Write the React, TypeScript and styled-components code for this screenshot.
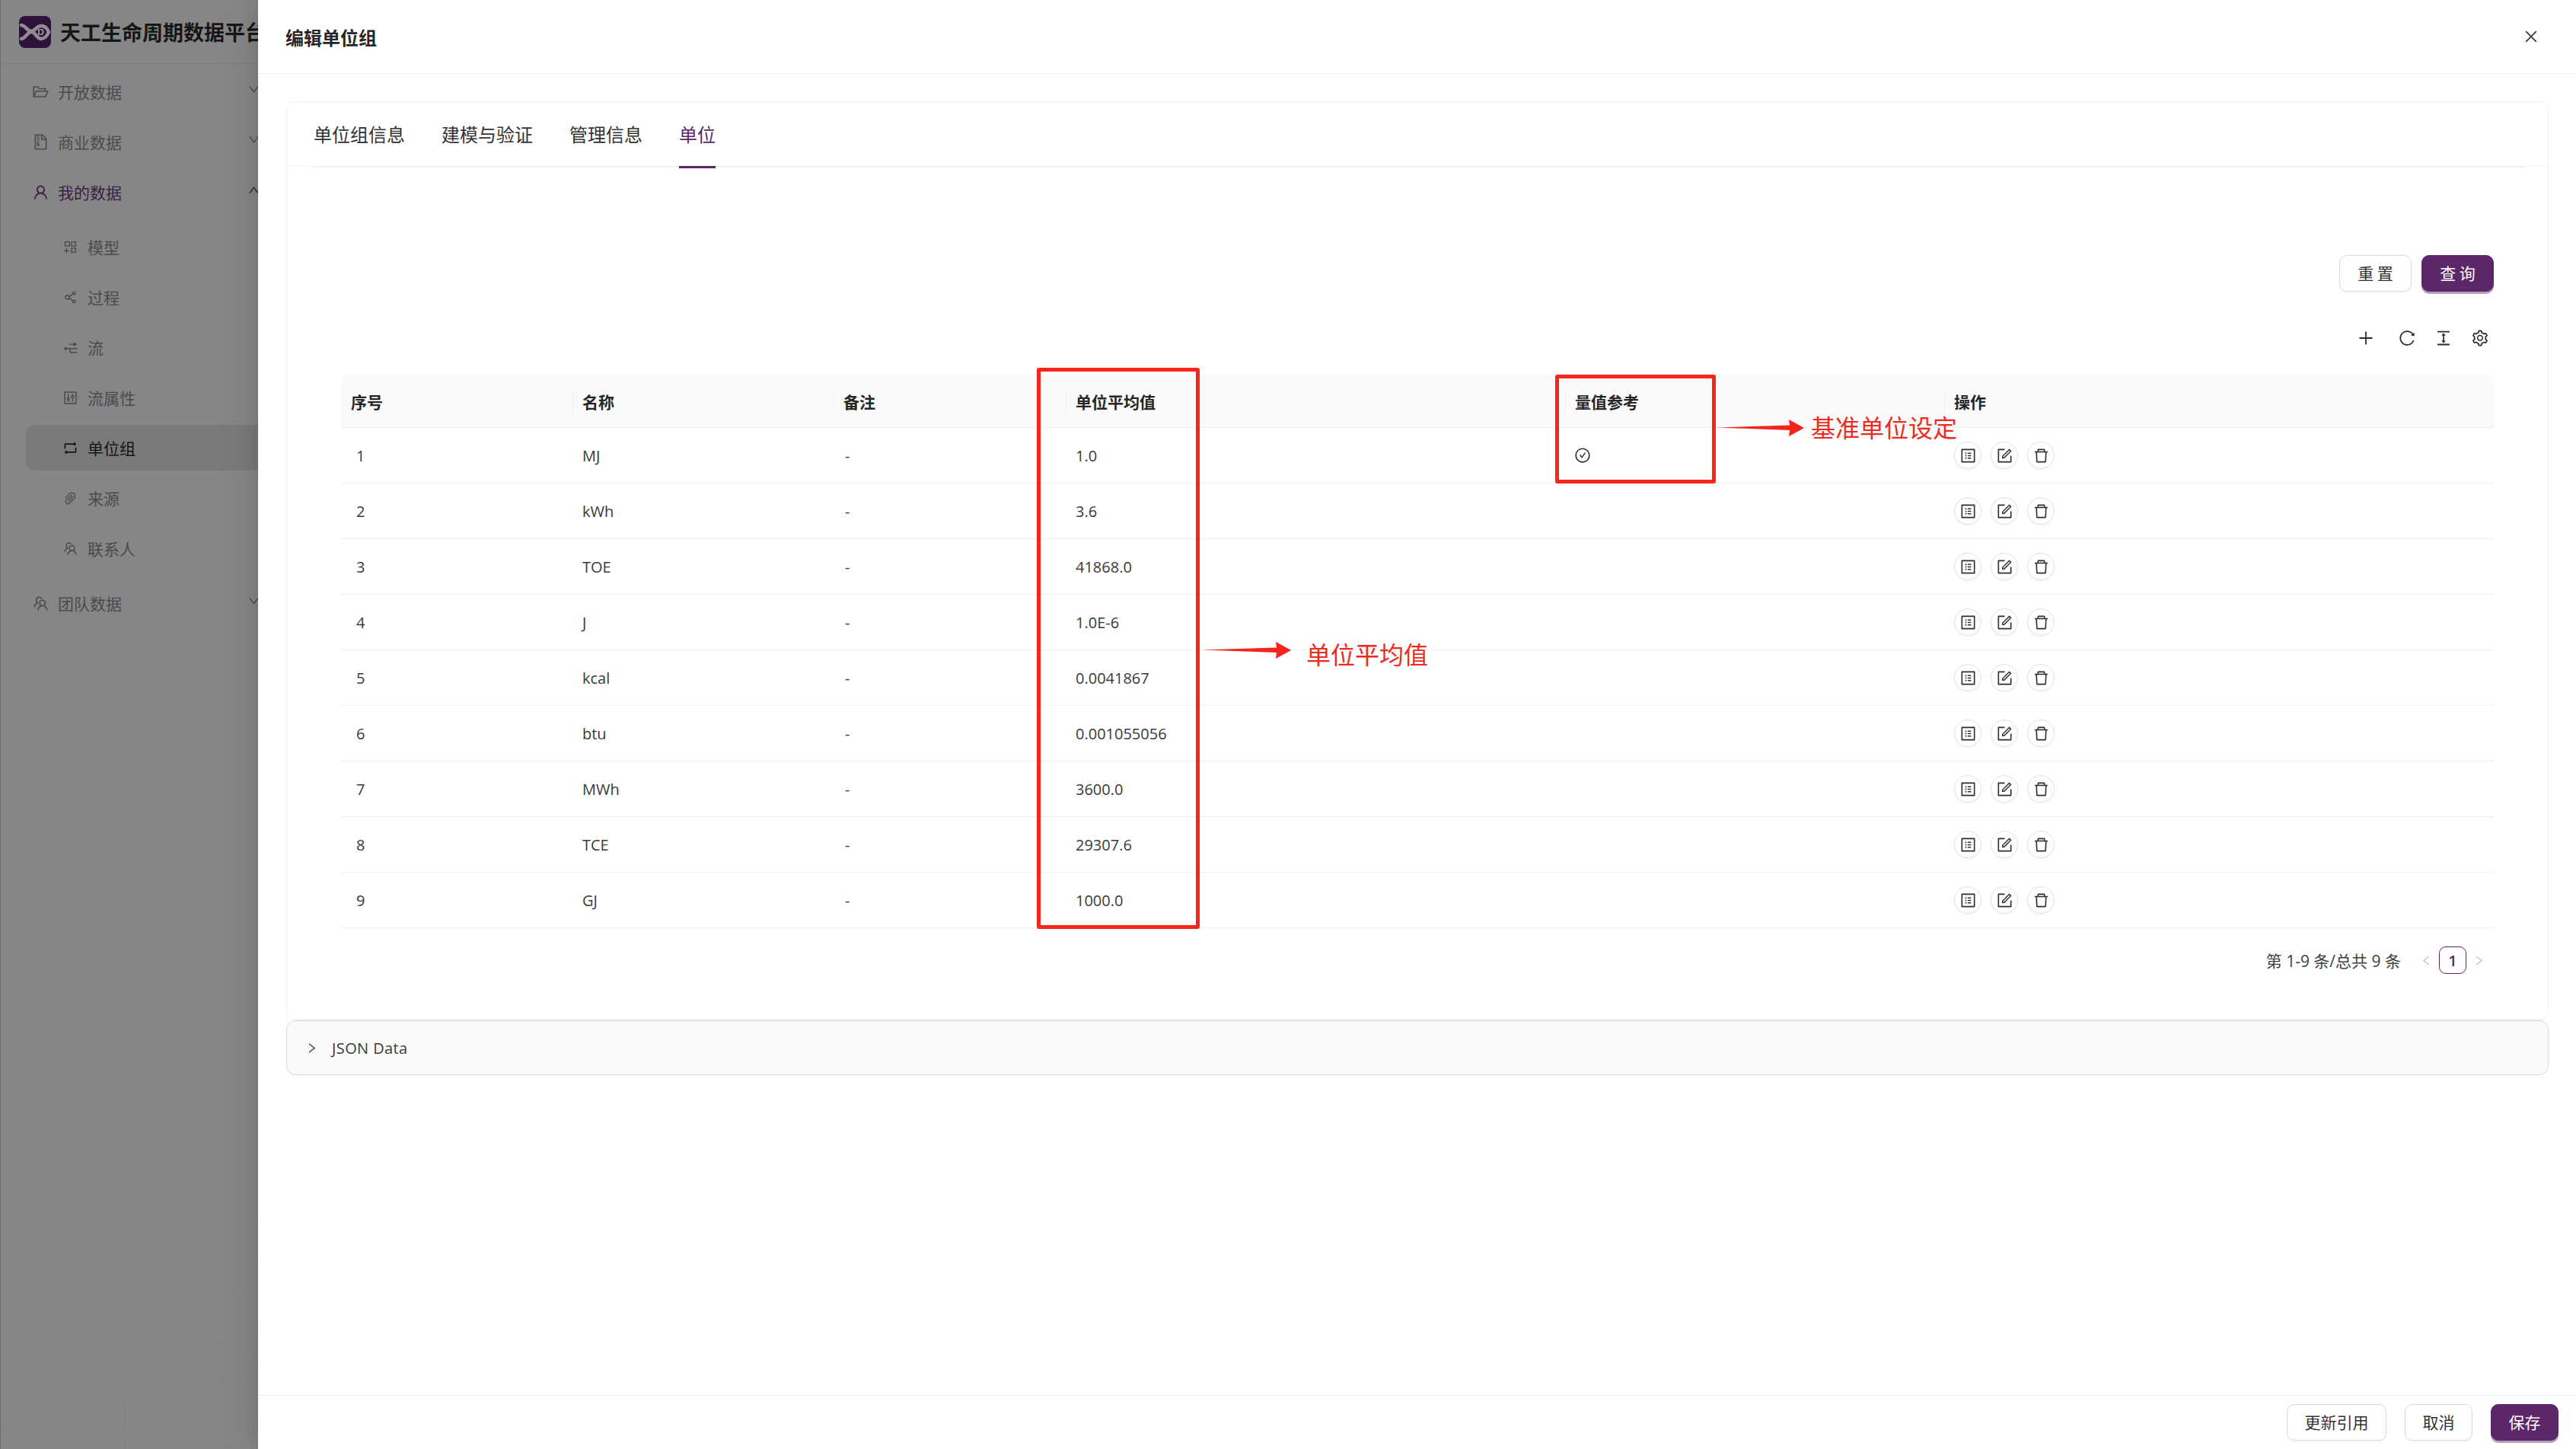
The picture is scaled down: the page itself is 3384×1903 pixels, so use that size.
import styled, { createGlobalStyle } from "styled-components";
import type { ReactNode } from "react";
import {
  AiOutlineAppstoreAdd,
  AiOutlineCheckCircle,
  AiOutlineClose,
  AiOutlineColumnHeight,
  AiOutlineControl,
  AiOutlineDelete,
  AiOutlineDown,
  AiOutlineFileZip,
  AiOutlineFolderOpen,
  AiOutlineForm,
  AiOutlineLeft,
  AiOutlineNodeExpand,
  AiOutlinePaperClip,
  AiOutlinePlus,
  AiOutlineProfile,
  AiOutlineReload,
  AiOutlineRetweet,
  AiOutlineRight,
  AiOutlineSetting,
  AiOutlineShareAlt,
  AiOutlineTeam,
  AiOutlineUp,
  AiOutlineUser,
} from "react-icons/ai";

const CJK = `"Noto Sans CJK SC", "Open Sans", sans-serif`;
const LATIN = `"Open Sans", "Noto Sans CJK SC", sans-serif`;
const PURPLE = "#5b2768";

const units = [
  { name: "MJ", value: "1.0", base: true },
  { name: "kWh", value: "3.6" },
  { name: "TOE", value: "41868.0" },
  { name: "J", value: "1.0E-6" },
  { name: "kcal", value: "0.0041867" },
  { name: "btu", value: "0.001055056" },
  { name: "MWh", value: "3600.0" },
  { name: "TCE", value: "29307.6" },
  { name: "GJ", value: "1000.0" },
];

const subItems: { label: string; icon: ReactNode; active?: boolean }[] = [
  { label: "模型", icon: <AiOutlineAppstoreAdd /> },
  { label: "过程", icon: <AiOutlineShareAlt /> },
  { label: "流", icon: <AiOutlineNodeExpand /> },
  { label: "流属性", icon: <AiOutlineControl /> },
  { label: "单位组", icon: <AiOutlineRetweet />, active: true },
  { label: "来源", icon: <AiOutlinePaperClip /> },
  { label: "联系人", icon: <AiOutlineTeam /> },
];

const GlobalStyle = createGlobalStyle`
  html, body {
    margin: 0;
    height: 100%;
    overflow: hidden;
    background: #fff;
  }
  * {
    box-sizing: border-box;
  }
`;

const Logo = () => (
  <LogoMark viewBox="0 0 42 42">
    <rect width="42" height="42" rx="8" fill="#2f1239" />
    <g fill="none" stroke="#918b92" strokeWidth="4.6" strokeLinecap="round">
      <path d="M3 12c5 0 8 8 13 8 5 0 7-7 13-7 4 0 8 3 10 8" />
      <path d="M3 30c5 0 8-9 13-9 6 0 7 9 13 9 4 0 8-4 10-9" />
    </g>
    <path d="M25 17h6l2 4-2 4h-6z" fill="#918b92" />
    <path d="M27 18.500h2.500l1 2.500-1 2.500h-2.500z" fill="#2f1239" />
  </LogoMark>
);

const Arrow = ({ width }: { width: number }) => (
  <svg width={width} height={22} viewBox={`0 0 ${width} 22`}>
    <polygon
      points={`0,10.500 ${width - 19},7.500 ${width - 20},0 ${width},11 ${width - 20},22 ${width - 19},14`}
      fill="#f5231b"
    />
  </svg>
);

const Sidebar = () => (
  <SideBar>
    <Triangles>
      <defs>
        <pattern id="tri" x="37" y="26" width="84" height="47" patternUnits="userSpaceOnUse">
          <path
            d="M0 0V47M42 0V47M0 0L42 23.500L84 0M0 47L42 23.500L84 47"
            fill="none"
            stroke="#6f8296"
            strokeWidth="1"
          />
        </pattern>
      </defs>
      <rect width="100%" height="100%" fill="url(#tri)" />
    </Triangles>
    <Brand>
      <Logo />
      <BrandName>天工生命周期数据平台</BrandName>
    </Brand>
    <Menu>
      <MenuRow>
        <MenuIcon><AiOutlineFolderOpen /></MenuIcon>
        开放数据
        <Caret><AiOutlineDown /></Caret>
      </MenuRow>
      <MenuRow>
        <MenuIcon><AiOutlineFileZip /></MenuIcon>
        商业数据
        <Caret><AiOutlineDown /></Caret>
      </MenuRow>
      <MenuRow $open>
        <MenuIcon><AiOutlineUser /></MenuIcon>
        我的数据
        <Caret><AiOutlineUp /></Caret>
      </MenuRow>
      <SubMenu>
        {subItems.map((item) => (
          <SubRow key={item.label} $active={item.active}>
            <SubIcon>{item.icon}</SubIcon>
            {item.label}
          </SubRow>
        ))}
      </SubMenu>
      <MenuRow>
        <MenuIcon><AiOutlineTeam /></MenuIcon>
        团队数据
        <Caret><AiOutlineDown /></Caret>
      </MenuRow>
    </Menu>
  </SideBar>
);

const UnitTable = () => (
  <Table>
    <colgroup>
      <col width={304} />
      <col width={343} />
      <col width={305} />
      <col width={656} />
      <col width={498} />
      <col width={722} />
    </colgroup>
    <thead>
      <tr>
        <Th>序号</Th>
        <Th $divider>名称</Th>
        <Th $divider>备注</Th>
        <Th $divider>单位平均值</Th>
        <Th $divider>量值参考</Th>
        <Th $divider>操作</Th>
      </tr>
    </thead>
    <tbody>
      {units.map((unit, index) => (
        <tr key={unit.name}>
          <IndexCell>{index + 1}</IndexCell>
          <Td>{unit.name}</Td>
          <NoteCell>-</NoteCell>
          <Td>{unit.value}</Td>
          <Td>
            {unit.base && (
              <BaseMark>
                <AiOutlineCheckCircle />
              </BaseMark>
            )}
          </Td>
          <Td>
            <Actions>
              <RoundButton><AiOutlineProfile /></RoundButton>
              <RoundButton><AiOutlineForm /></RoundButton>
              <RoundButton><AiOutlineDelete /></RoundButton>
            </Actions>
          </Td>
        </tr>
      ))}
    </tbody>
  </Table>
);

const App = () => (
  <>
    <GlobalStyle />
    <Page>
      <Sidebar />
      <Drawer>
        <DrawerHeader>
          <DrawerTitle>编辑单位组</DrawerTitle>
          <CloseIcon><AiOutlineClose /></CloseIcon>
        </DrawerHeader>
        <DrawerBody>
          <Card>
            <TabBar>
              <TabList>
                <Tab>单位组信息</Tab>
                <Tab>建模与验证</Tab>
                <Tab>管理信息</Tab>
                <Tab $active>单位</Tab>
              </TabList>
            </TabBar>
            <CardBody>
              <SearchRow>
                <Button>重 置</Button>
                <Button $primary>查 询</Button>
              </SearchRow>
              <ToolRow>
                <AiOutlinePlus />
                <AiOutlineReload />
                <AiOutlineColumnHeight />
                <AiOutlineSetting />
              </ToolRow>
              <UnitTable />
              <Pager>
                <PagerText>第 1-9 条/总共 9 条</PagerText>
                <PagerArrow><AiOutlineLeft /></PagerArrow>
                <PageNumber>1</PageNumber>
                <PagerArrow><AiOutlineRight /></PagerArrow>
              </Pager>
            </CardBody>
          </Card>
          <Collapse>
            <AiOutlineRight />
            JSON Data
          </Collapse>
        </DrawerBody>
        <DrawerFooter>
          <Button>更新引用</Button>
          <Button>取消</Button>
          <Button $primary>保存</Button>
        </DrawerFooter>

        <MarkBox $left={1023} $top={483} $width={214} $height={737} />
        <MarkBox $left={1704} $top={492} $width={211} $height={143} />
        <MarkArrow $left={1241} $top={843}><Arrow width={116} /></MarkArrow>
        <MarkArrow $left={1917} $top={551}><Arrow width={114} /></MarkArrow>
        <MarkText $left={1377} $top={834}>单位平均值</MarkText>
        <MarkText $left={2040} $top={536}>基准单位设定</MarkText>
      </Drawer>
    </Page>
  </>
);

const Page = styled.div`
  position: relative;
  width: 100vw;
  height: 100vh;
  overflow: hidden;
  background: #868686;
`;

const SideBar = styled.aside`
  position: relative;
  width: 370px;
  height: 100%;
  border-left: 1px solid #6f6f6f;
  font-family: ${CJK};
  font-size: 21px;
  color: #4b4b4b;
`;

const Triangles = styled.svg`
  position: absolute;
  inset: 0;
  width: 100%;
  height: 100%;
  opacity: 0.5;
  mask-image: linear-gradient(to bottom, transparent 1600px, #000 1903px);
`;

const Brand = styled.div`
  position: relative;
  display: flex;
  align-items: center;
  gap: 12px;
  height: 84px;
  padding-left: 24px;
  border-bottom: 1px solid #7d7d7d;
`;

const LogoMark = styled.svg`
  width: 42px;
  height: 42px;
  flex: none;
`;

const BrandName = styled.span`
  font-size: 27px;
  font-weight: 700;
  color: #161616;
  white-space: nowrap;
`;

const Menu = styled.nav`
  position: relative;
  display: flex;
  flex-direction: column;
  gap: 6px;
  padding-top: 6px;
`;

const MenuRow = styled.div<{ $open?: boolean }>`
  display: flex;
  align-items: center;
  height: 60px;
  padding-left: 41px;
  color: ${({ $open }) => ($open ? "#3c1d4a" : "#4b4b4b")};
`;

const MenuIcon = styled.span`
  display: flex;
  width: 34px;
  font-size: 23px;
`;

const Caret = styled.span`
  display: flex;
  margin-left: auto;
  margin-right: 28px;
  margin-top: -6px;
  font-size: 17px;
`;

const SubMenu = styled.div`
  display: flex;
  flex-direction: column;
  gap: 6px;
  margin: 6px 0;
`;

const SubRow = styled.div<{ $active?: boolean }>`
  display: flex;
  align-items: center;
  height: 60px;
  margin-left: 33px;
  padding-left: 48px;
  border-radius: 12px;
  background: ${({ $active }) => ($active ? "#7a7a7a" : "transparent")};
  color: ${({ $active }) => ($active ? "#141414" : "#4b4b4b")};
`;

const SubIcon = styled.span`
  display: flex;
  width: 33px;
  font-size: 21px;
`;

const Drawer = styled.section`
  position: absolute;
  top: 0;
  right: 0;
  bottom: 0;
  left: 339px;
  display: flex;
  flex-direction: column;
  background: #fff;
  box-shadow: -9px 0 24px -12px rgba(0, 0, 0, 0.12), -14px 0 42px rgba(0, 0, 0, 0.07);
  font-family: ${CJK};
`;

const DrawerHeader = styled.header`
  display: flex;
  align-items: center;
  justify-content: space-between;
  flex: none;
  height: 97px;
  padding: 0 36px 0 36px;
  border-bottom: 1px solid #f0f0f0;
`;

const DrawerTitle = styled.h1`
  margin: 0;
  font-size: 24px;
  font-weight: 700;
  color: #262626;
`;

const CloseIcon = styled.span`
  display: flex;
  margin-right: 12px;
  font-size: 22px;
  color: #3b3b3b;
`;

const DrawerBody = styled.main`
  flex: 1;
  padding: 36px 36px 0 37px;
`;

const Card = styled.div`
  height: 1207px;
  border: 1px solid #f0f0f0;
  border-radius: 12px;
`;

const TabBar = styled.div`
  height: 85px;
  padding: 0 30px 0 35px;
  border-bottom: 1px solid #f3f3f3;
`;

const TabList = styled.div`
  display: flex;
  gap: 48px;
  height: 86px;
  border-bottom: 2px solid #f0f0f0;
`;

const Tab = styled.div<{ $active?: boolean }>`
  height: 87px;
  padding-top: 24px;
  font-size: 24px;
  line-height: 36px;
  color: ${({ $active }) => ($active ? PURPLE : "#333")};
  border-bottom: ${({ $active }) => ($active ? `3px solid ${PURPLE}` : "none")};
`;

const CardBody = styled.div`
  padding: 116px 71px 0;
`;

const SearchRow = styled.div`
  display: flex;
  justify-content: flex-end;
  gap: 13px;

  button {
    width: 95px;
    padding: 0 0 2px;
  }
`;

const Button = styled.button<{ $primary?: boolean }>`
  height: 48px;
  padding: 0 22.500px 2px;
  border: 1px solid ${({ $primary }) => ($primary ? PURPLE : "#d9d9d9")};
  border-radius: 10px;
  background: ${({ $primary }) => ($primary ? PURPLE : "#fff")};
  box-shadow: 0 3px 0 ${({ $primary }) => ($primary ? "rgba(91, 39, 104, 0.45)" : "rgba(0, 0, 0, 0.02)")};
  font-family: ${CJK};
  font-size: 21px;
  color: ${({ $primary }) => ($primary ? "#fff" : "#333")};
`;

const ToolRow = styled.div`
  display: flex;
  justify-content: flex-end;
  align-items: center;
  gap: 24px;
  height: 46px;
  margin-top: 38px;
  margin-bottom: 25px;
  padding-right: 6px;
  font-size: 24px;
  color: #2b2b2b;

  svg:first-child {
    margin-right: 6px;
  }
`;

const Table = styled.table`
  width: 100%;
  table-layout: fixed;
  border-collapse: separate;
  border-spacing: 0;
  font-family: ${LATIN};
  font-size: 20px;
  color: #3a3a3a;
`;

const Th = styled.th<{ $divider?: boolean }>`
  position: relative;
  height: 70px;
  padding: 0 13px;
  background: #fafafa;
  border-bottom: 1px solid #f0f0f0;
  font-family: ${CJK};
  font-size: 21px;
  font-weight: 700;
  color: #262626;
  text-align: left;

  &:first-child {
    border-top-left-radius: 12px;
  }
  &:last-child {
    border-top-right-radius: 12px;
  }
  &::before {
    content: "";
    display: ${({ $divider }) => ($divider ? "block" : "none")};
    position: absolute;
    left: 0;
    top: 20px;
    height: 30px;
    border-left: 1px solid #f0f0f0;
  }
`;

const Td = styled.td`
  height: 73px;
  padding: 0 13px;
  border-bottom: 1px solid #f0f0f0;
`;

const IndexCell = styled(Td)`
  padding-left: 20px;
`;

const NoteCell = styled(Td)`
  padding-left: 15px;
`;

const BaseMark = styled.span`
  display: flex;
  margin-left: -1px;
  font-size: 22px;
  color: #333;
`;

const Actions = styled.div`
  display: flex;
  gap: 12px;
`;

const RoundButton = styled.span`
  display: flex;
  align-items: center;
  justify-content: center;
  width: 36px;
  height: 36px;
  border: 1px solid #dfdfdf;
  border-radius: 50%;
  box-shadow: 0 3px 0 rgba(0, 0, 0, 0.02);
  font-size: 23px;
  color: #2f2f2f;
`;

const Pager = styled.div`
  display: flex;
  justify-content: flex-end;
  align-items: center;
  gap: 8px;
  margin-top: 24px;
  padding-right: 11px;
`;

const PagerText = styled.span`
  margin-right: 17px;
  font-family: ${LATIN};
  font-size: 21px;
  color: #404040;
`;

const PagerArrow = styled.span`
  display: flex;
  font-size: 17px;
  color: #c4c4c4;
`;

const PageNumber = styled.span`
  display: flex;
  align-items: center;
  justify-content: center;
  width: 36px;
  height: 36px;
  border: 1.5px solid ${PURPLE};
  border-radius: 9px;
  font-family: ${LATIN};
  font-size: 20px;
  font-weight: 600;
  color: ${PURPLE};
`;

const Collapse = styled.div`
  display: flex;
  align-items: center;
  gap: 18px;
  height: 72px;
  padding-left: 24px;
  background: #fafafa;
  border: 1px solid #d9d9d9;
  border-radius: 12px;
  font-family: ${LATIN};
  font-size: 20px;
  letter-spacing: 0.4px;
  color: #3a3a3a;

  svg {
    font-size: 17px;
  }
`;

const DrawerFooter = styled.footer`
  display: flex;
  justify-content: flex-end;
  gap: 24px;
  flex: none;
  height: 71px;
  padding: 11px 23px 0 0;
  border-top: 1px solid #f0f0f0;
`;

const MarkBox = styled.div<{ $left: number; $top: number; $width: number; $height: number }>`
  position: absolute;
  left: ${({ $left }) => $left}px;
  top: ${({ $top }) => $top}px;
  width: ${({ $width }) => $width}px;
  height: ${({ $height }) => $height}px;
  border: 5px solid #f7261a;
  border-radius: 3px;
`;

const MarkArrow = styled.div<{ $left: number; $top: number }>`
  position: absolute;
  left: ${({ $left }) => $left}px;
  top: ${({ $top }) => $top}px;
  display: flex;
`;

const MarkText = styled.div<{ $left: number; $top: number }>`
  position: absolute;
  left: ${({ $left }) => $left}px;
  top: ${({ $top }) => $top}px;
  font-size: 32px;
  line-height: 48px;
  color: #ee2a22;
  white-space: nowrap;
`;

export default App;
